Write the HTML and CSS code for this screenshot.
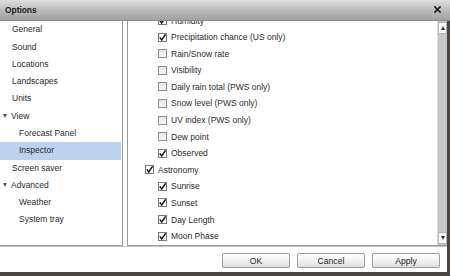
FILE: index.html
```html
<!DOCTYPE html>
<html>
<head>
<meta charset="utf-8">
<link rel="stylesheet" href="styles.css">
</head>
<body>
<div class="window">
  <div class="titlebar">
    <span class="title">Options</span>
    <svg class="close" width="7" height="7" viewBox="0 0 7 7"><path d="M1 1L6 6M6 1L1 6" stroke="#1a1a1a" stroke-width="1.7" stroke-linecap="square"/></svg>
  </div>
  <div class="main">
    <div class="nav">
      <div class="nav-item">General</div>
      <div class="nav-item">Sound</div>
      <div class="nav-item">Locations</div>
      <div class="nav-item">Landscapes</div>
      <div class="nav-item">Units</div>
      <div class="nav-item group"><span class="tri"></span>View</div>
      <div class="nav-item child">Forecast Panel</div>
      <div class="nav-item child selected">Inspector</div>
      <div class="nav-item">Screen saver</div>
      <div class="nav-item group"><span class="tri"></span>Advanced</div>
      <div class="nav-item child">Weather</div>
      <div class="nav-item child">System tray</div>
    </div>
    <div class="panel">
      <div class="content">
        <div class="list">
          <div class="row sub"><span class="cb on"><svg viewBox="0 0 9 9"><path d="M1.8 4.4L3.7 6.9L7.6 1.4" fill="none" stroke="#111" stroke-width="1.5"/></svg></span>Humidity</div>
          <div class="row sub"><span class="cb on"><svg viewBox="0 0 9 9"><path d="M1.8 4.4L3.7 6.9L7.6 1.4" fill="none" stroke="#111" stroke-width="1.5"/></svg></span>Precipitation chance (US only)</div>
          <div class="row sub"><span class="cb"></span>Rain/Snow rate</div>
          <div class="row sub"><span class="cb"></span>Visibility</div>
          <div class="row sub"><span class="cb"></span>Daily rain total (PWS only)</div>
          <div class="row sub"><span class="cb"></span>Snow level (PWS only)</div>
          <div class="row sub"><span class="cb"></span>UV index (PWS only)</div>
          <div class="row sub"><span class="cb"></span>Dew point</div>
          <div class="row sub"><span class="cb on"><svg viewBox="0 0 9 9"><path d="M1.8 4.4L3.7 6.9L7.6 1.4" fill="none" stroke="#111" stroke-width="1.5"/></svg></span>Observed</div>
          <div class="row top"><span class="cb on"><svg viewBox="0 0 9 9"><path d="M1.8 4.4L3.7 6.9L7.6 1.4" fill="none" stroke="#111" stroke-width="1.5"/></svg></span>Astronomy</div>
          <div class="row sub"><span class="cb on"><svg viewBox="0 0 9 9"><path d="M1.8 4.4L3.7 6.9L7.6 1.4" fill="none" stroke="#111" stroke-width="1.5"/></svg></span>Sunrise</div>
          <div class="row sub"><span class="cb on"><svg viewBox="0 0 9 9"><path d="M1.8 4.4L3.7 6.9L7.6 1.4" fill="none" stroke="#111" stroke-width="1.5"/></svg></span>Sunset</div>
          <div class="row sub"><span class="cb on"><svg viewBox="0 0 9 9"><path d="M1.8 4.4L3.7 6.9L7.6 1.4" fill="none" stroke="#111" stroke-width="1.5"/></svg></span>Day Length</div>
          <div class="row sub"><span class="cb on"><svg viewBox="0 0 9 9"><path d="M1.8 4.4L3.7 6.9L7.6 1.4" fill="none" stroke="#111" stroke-width="1.5"/></svg></span>Moon Phase</div>
        </div>
      </div>
      <div class="scrollbar">
        <div class="sb-btn"><span class="arrow up"></span></div>
        <div class="sb-track"></div>
        <div class="sb-btn"><span class="arrow down"></span></div>
        <div class="sb-end"></div>
      </div>
    </div>
  </div>
  <div class="footer">
    <button class="btn">OK</button>
    <button class="btn">Cancel</button>
    <button class="btn">Apply</button>
  </div>
</div>
</body>
</html>
```
FILE: styles.css
```css
html, body {
  margin: 0;
  padding: 0;
}
body {
  width: 450px;
  height: 276px;
  overflow: hidden;
  background: #4a4540;
  font-family: "Liberation Sans", Arial, sans-serif;
  font-size: 8.5px;
  color: #2a2a2a;
}
.window {
  display: flex;
  flex-direction: column;
  width: 450px;
}
.titlebar {
  height: 21px;
  box-sizing: border-box;
  background: linear-gradient(#dedede, #b8b8b8 55%, #a2a2a2);
  border-bottom: 1px solid #8c8c8c;
  display: flex;
  align-items: center;
  justify-content: space-between;
  padding: 0 9px 1px 5px;
}
.title {
  font-weight: bold;
  font-size: 8.4px;
  color: #1e1e1e;
}
.close {
  display: block;
}
.main {
  display: flex;
  width: 447px;
  height: 225px;
  background: #fff;
  gap: 4px;
}
.nav {
  width: 123px;
  box-sizing: border-box;
  border-right: 1px solid #9a9a9a;
  border-bottom: 1px solid #9a9a9a;
  padding-top: 0.4px;
}
.nav-item {
  height: 17.27px;
  line-height: 17.27px;
  padding-left: 12px;
  display: flex;
  align-items: center;
  white-space: nowrap;
}
.nav-item.group {
  padding-left: 3px;
}
.tri {
  width: 0;
  height: 0;
  border-left: 2.5px solid transparent;
  border-right: 2.5px solid transparent;
  border-top: 4px solid #555;
  margin-right: 4px;
}
.nav-item.child {
  padding-left: 19px;
}
.nav-item.selected {
  background: #bad2ed;
  margin-right: 1px;
}
.panel {
  flex: 1;
  display: flex;
  box-sizing: border-box;
  border-left: 1px solid #9a9a9a;
  border-bottom: 1px solid #9a9a9a;
}
.content {
  flex: 1;
  overflow: hidden;
}
.list {
  margin-top: -8.7px;
}
.row {
  height: 16.58px;
  display: flex;
  align-items: center;
  white-space: nowrap;
}
.row.sub {
  padding-left: 30px;
}
.row.top {
  padding-left: 17px;
}
.cb {
  width: 9px;
  height: 9px;
  box-sizing: border-box;
  border: 1px solid #8e8e8e;
  background: linear-gradient(#e6e6e6, #f6f6f6);
  margin-right: 4px;
  flex: none;
  display: flex;
}
.cb.on {
  background: #fff;
  border-color: #7a7a7a;
}
.cb svg {
  width: 9px;
  height: 9px;
  margin: -1px;
}
.scrollbar {
  width: 10px;
  display: flex;
  flex-direction: column;
  background: #c6c6c6;
  border-left: 1px solid #dcdcdc;
  box-sizing: border-box;
}
.sb-btn {
  height: 10px;
  margin: 1px 0 0 0;
  background: #fbfbfb;
  border: 1px solid #b4b4b4;
  display: flex;
  align-items: center;
  justify-content: center;
}
.sb-track {
  flex: 1;
}
.sb-end {
  height: 1px;
}
.arrow {
  width: 0;
  height: 0;
  border-left: 2.5px solid transparent;
  border-right: 2.5px solid transparent;
}
.arrow.up {
  border-bottom: 4px solid #333;
}
.arrow.down {
  border-top: 4px solid #333;
}
.footer {
  width: 447px;
  height: 26px;
  box-sizing: border-box;
  background: #fff;
  border-top: 1px solid #c4c4c4;
  display: flex;
  justify-content: flex-end;
  align-items: flex-start;
  gap: 7px;
  padding: 6px 7px 0 0;
}
.btn {
  width: 68px;
  height: 15px;
  margin: 0;
  padding: 0;
  font-family: "Liberation Sans", Arial, sans-serif;
  font-size: 8.6px;
  color: #222;
  background: linear-gradient(#ffffff, #f2f2f2 50%, #dedede);
  border: 1px solid #9c9c9c;
  border-radius: 2px;
}
```
